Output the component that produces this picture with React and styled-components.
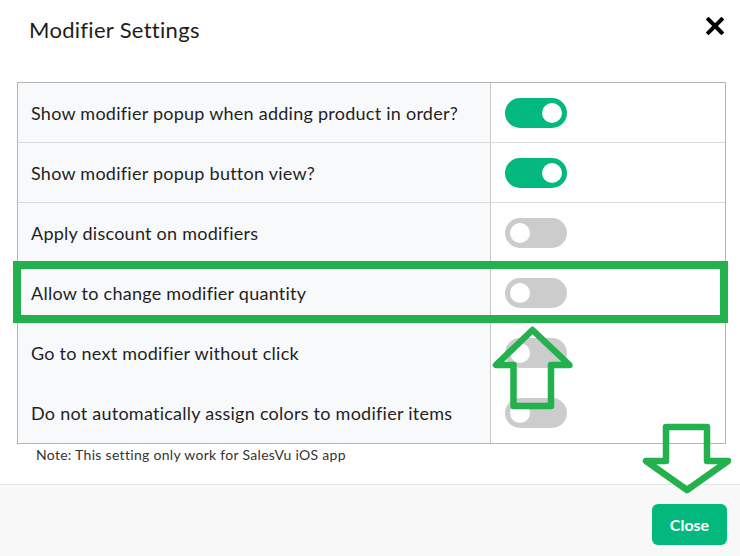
import React from 'react';
import styled, { createGlobalStyle } from 'styled-components';

const GlobalStyle = createGlobalStyle`
  html, body {
    margin: 0;
    padding: 0;
    background: #ffffff;
  }
  body {
    font-family: Lato, "Open Sans", sans-serif;
    color: #1f1f1f;
  }
`;

const settings = [
  { label: 'Show modifier popup when adding product in order?', on: true },
  { label: 'Show modifier popup button view?', on: true },
  { label: 'Apply discount on modifiers', on: false },
  { label: 'Allow to change modifier quantity', on: false },
  { label: 'Go to next modifier without click', on: false, noLine: true },
  { label: 'Do not automatically assign colors to modifier items', on: false },
];

function Toggle({ on }) {
  return (
    <Styled.Toggle $on={on}>
      <Styled.Knob $on={on} />
    </Styled.Toggle>
  );
}

function App() {
  return (
    <>
      <GlobalStyle />
      <Styled.Modal>
        <Styled.Header>
          <Styled.Title>Modifier Settings</Styled.Title>
          <Styled.CloseIcon aria-label="close">
            <svg width="18" height="18" viewBox="0 0 18 18">
              <path d="M2.5 2.5 L15.5 15.5 M15.5 2.5 L2.5 15.5" stroke="#000" strokeWidth="4" strokeLinecap="square" />
            </svg>
          </Styled.CloseIcon>
        </Styled.Header>

        <Styled.Body>
          <Styled.Table>
            {settings.map((s, i) => (
              <Styled.Row key={s.label} $last={i === settings.length - 1} $noLine={s.noLine}>
                <Styled.LabelCell>{s.label}</Styled.LabelCell>
                <Styled.ValueCell>
                  <Toggle on={s.on} />
                </Styled.ValueCell>
              </Styled.Row>
            ))}
          </Styled.Table>
          <Styled.Note>Note: This setting only work for SalesVu iOS app</Styled.Note>
        </Styled.Body>

        <Styled.Footer>
          <Styled.Button>Close</Styled.Button>
        </Styled.Footer>

        {/* annotation marks drawn over the screenshot */}
        <Styled.Marks width="740" height="556" viewBox="0 0 740 556">
          <rect x="17" y="265" width="707" height="54" fill="none" stroke="#22b14c" strokeWidth="8" />
          <path
            d="M532.5 330 L496 365 L513.5 365 L513.5 406 L551 406 L551 365 L569.5 365 Z"
            fill="none"
            stroke="#22b14c"
            strokeWidth="6.5"
            strokeLinejoin="round"
          />
          <path
            d="M666 427 L707 427 L707 461 L728 461 L687 490 L646 461 L666 461 Z"
            fill="none"
            stroke="#22b14c"
            strokeWidth="6.5"
            strokeLinejoin="round"
          />
        </Styled.Marks>
      </Styled.Modal>
    </>
  );
}

const Styled = {
  Modal: styled.div`
    position: relative;
    width: 740px;
    height: 556px;
    display: flex;
    flex-direction: column;
    background: #fff;
    overflow: hidden;
  `,
  Header: styled.div`
    height: 60px;
    display: flex;
    align-items: center;
    justify-content: space-between;
    padding: 0 16px 0 29px;
    box-sizing: border-box;
  `,
  Title: styled.h1`
    margin: 0 0 2px;
    font-size: 22px;
    font-weight: 400;
    letter-spacing: 0.3px;
    color: #1d1d1d;
  `,
  CloseIcon: styled.span`
    display: inline-flex;
    margin-top: -8px;
  `,
  Body: styled.div`
    padding: 22px 14px 0 17px;
    height: 424px;
    box-sizing: border-box;
  `,
  Table: styled.div`
    border: 1px solid #b4b4b4;
  `,
  Row: styled.div`
    display: grid;
    grid-template-columns: 473px 1fr;
    height: 60px;
    border-bottom: ${(p) => (p.$last || p.$noLine ? 'none' : '1px solid #dadada')};
    box-sizing: border-box;
  `,
  LabelCell: styled.div`
    display: flex;
    align-items: center;
    padding-left: 13px;
    background: #f8f9fb;
    border-right: 1px solid #c9c9c9;
    font-size: 18px;
    letter-spacing: 0.25px;
    color: #1f1f1f;
  `,
  ValueCell: styled.div`
    display: flex;
    align-items: center;
    padding-left: 14px;
    background: #fff;
  `,
  Toggle: styled.div`
    width: 62px;
    height: 30px;
    border-radius: 15px;
    background: ${(p) => (p.$on ? '#02b87c' : '#cccccc')};
    display: flex;
    align-items: center;
    justify-content: ${(p) => (p.$on ? 'flex-end' : 'flex-start')};
    padding: 0 5px;
    box-sizing: border-box;
  `,
  Knob: styled.div`
    width: 20px;
    height: 20px;
    border-radius: 50%;
    background: #fff;
  `,
  Note: styled.div`
    margin: 2px 0 0 19px;
    font-size: 14px;
    letter-spacing: 0.3px;
    color: #333;
  `,
  Footer: styled.div`
    flex: 1;
    display: flex;
    justify-content: flex-end;
    align-items: flex-start;
    padding: 19px 13px 0 0;
    background: #f8f8f8;
    border-top: 1px solid #e4e4e4;
  `,
  Button: styled.button`
    width: 75px;
    height: 41px;
    border: none;
    border-radius: 6px;
    background: #02b87c;
    color: #fff;
    font-family: Lato, "Open Sans", sans-serif;
    font-size: 16px;
    font-weight: 700;
    cursor: pointer;
  `,
  Marks: styled.svg`
    position: absolute;
    top: 0;
    left: 0;
    pointer-events: none;
  `,
};

export default App;
